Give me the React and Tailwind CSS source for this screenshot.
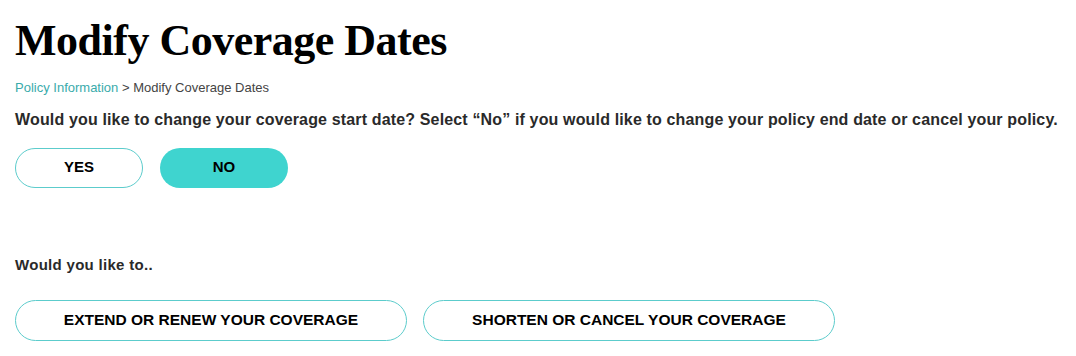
export default function App() {
  return (
    <div className="w-[1076px] h-[356px] bg-white px-[15px] pt-[16px] font-['Liberation_Sans',Arial,sans-serif] text-[#222]">
      <h1 className="font-['Liberation_Serif',serif] font-bold text-[44px] leading-[50px] text-black tracking-[-0.5px]">
        Modify Coverage Dates
      </h1>
      <div className="mt-[14px] text-[13px] leading-[16px] text-[#444]">
        <span className="text-[#3aabab]">Policy Information</span> &gt; Modify Coverage Dates
      </div>
      <p className="mt-[15px] text-[16px] leading-[18px] font-bold text-[#2a2a2a] tracking-[0.15px]">
        Would you like to change your coverage start date? Select “No” if you would like to change your policy end date or cancel your policy.
      </p>
      <div className="mt-[19px] flex gap-[17px]">
        <button className="w-[128px] h-[40px] pb-[2px] rounded-full border border-[#5ccccc] bg-white text-[15px] font-bold text-black">
          YES
        </button>
        <button className="w-[128px] h-[40px] pb-[2px] rounded-full bg-[#3fd4cf] text-[15px] font-bold text-black">
          NO
        </button>
      </div>
      <p className="mt-[68px] text-[15px] leading-[18px] font-bold text-[#2a2a2a] tracking-[0.3px]">Would you like to..</p>
      <div className="mt-[26px] flex gap-[16px]">
        <button className="w-[392px] h-[41px] pb-[2px] rounded-full border border-[#5ccccc] bg-white text-[15.5px] font-bold text-black">
          EXTEND OR RENEW YOUR COVERAGE
        </button>
        <button className="w-[412px] h-[41px] pb-[2px] rounded-full border border-[#5ccccc] bg-white text-[15.5px] font-bold text-black">
          SHORTEN OR CANCEL YOUR COVERAGE
        </button>
      </div>
    </div>
  );
}
